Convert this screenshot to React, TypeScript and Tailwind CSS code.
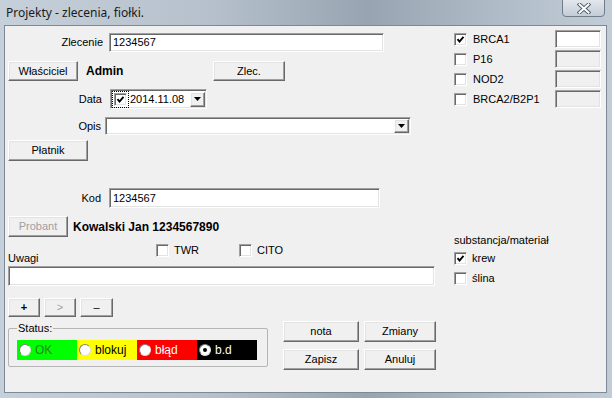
import React from "react";

const sunken =
  "border border-t-[#a0a0a0] border-l-[#a0a0a0] border-r-white border-b-white shadow-[inset_1px_1px_0_#696969,inset_-1px_-1px_0_#e3e3e3]";
const raised =
  "border border-t-white border-l-white border-r-[#696969] border-b-[#696969] shadow-[inset_-1px_-1px_0_#a0a0a0,inset_1px_1px_0_#e3e3e3] bg-[#f0f0f0]";

const Button = ({label, className = "", disabled = false}: {label: string; className?: string; disabled?: boolean}) => (
  <div
    className={`${raised} ${className} flex items-center justify-center text-[11px] ${
      disabled ? "text-[#a0a0a0]" : "text-black"
    }`}
  >
    {label}
  </div>
);

const Check = ({checked = false}: {checked?: boolean}) => (
  <span className={`${sunken} w-[13px] h-[13px] bg-white flex items-center justify-center shrink-0`}>
    {checked && (
      <svg width="9" height="9" viewBox="0 0 9 9">
        <polyline points="1.5,4.2 3.5,6.5 7.5,1.8" fill="none" stroke="#000" strokeWidth="1.9" />
      </svg>
    )}
  </span>
);

const Arrow = () => (
  <svg width="7" height="4" viewBox="0 0 7 4">
    <polygon points="0,0 7,0 3.5,4" fill="#000" />
  </svg>
);

const Radio = ({checked = false}: {checked?: boolean}) => (
  <span className="w-[12px] h-[12px] rounded-full bg-white border border-[#808080] border-b-[#e0e0e0] border-r-[#e0e0e0] flex items-center justify-center shrink-0">
    {checked && <span className="w-[4px] h-[4px] rounded-full bg-black" />}
  </span>
);

const Label = ({text, w}: {text: string; w: string}) => (
  <span className={`${w} text-right text-[11px] shrink-0`}>{text}</span>
);

const genes = [
  {name: "BRCA1", checked: true},
  {name: "P16", checked: false},
  {name: "NOD2", checked: false},
  {name: "BRCA2/B2P1", checked: false},
];

const statuses = [
  {name: "OK", bg: "bg-[#00ff00]", fg: "text-[#2f7f2f]", checked: false},
  {name: "blokuj", bg: "bg-[#ffff00]", fg: "text-black", checked: false},
  {name: "błąd", bg: "bg-[#ff0000]", fg: "text-white", checked: false},
  {name: "b.d", bg: "bg-black", fg: "text-white", checked: true},
];

const App = () => {
  return (
    <div className="w-[612px] h-[398px] flex flex-col bg-[linear-gradient(90deg,#c6d0da_0%,#b5c0cc_35%,#98a4b1_60%,#b3bfcb_85%,#c2ccd6_100%)] font-['Liberation_Sans',Arial,sans-serif] text-black overflow-hidden">
      {/* Title bar */}
      <div className="h-[25px] flex items-start shrink-0">
        <span className="ml-[6px] mt-[4px] text-[12px] font-['Noto_Sans',sans-serif] text-[#1a1a1a]">
          Projekty - zlecenia, fiołki.
        </span>
        <div className="ml-auto mr-[7px] -mt-[1px] w-[43px] h-[18px] rounded-b-[4px] border border-[#6f7c8a] bg-[linear-gradient(180deg,#e2e7ec,#c3ccd6)] flex items-center justify-center">
          <svg width="14" height="11" viewBox="0 0 14 11">
            <path d="M2.5 1.5 L11.5 9.5 M11.5 1.5 L2.5 9.5" stroke="#4a5562" strokeWidth="3.8" strokeLinecap="square" />
            <path d="M2.5 1.5 L11.5 9.5 M11.5 1.5 L2.5 9.5" stroke="#ffffff" strokeWidth="2" strokeLinecap="square" />
          </svg>
        </div>
      </div>

      {/* Client area */}
      <div className="ml-[4px] mr-[5px] h-[368px] border border-[#7d8996] bg-[#f0f0f0] flex">
        {/* Left column */}
        <div className="pl-[3px] w-[435px] flex flex-col">
          <div className="mt-[7px] h-[19px] flex items-center">
            <Label text="Zlecenie" w="w-[95px]" />
            <div className={`${sunken} ml-[6px] w-[275px] h-[19px] bg-white flex items-center pl-[3px] text-[11px]`}>
              1234567
            </div>
          </div>

          <div className="mt-[9px] h-[20px] flex items-center">
            <Button label="Właściciel" className="w-[70px] h-[20px]" />
            <span className="ml-[8px] w-[127px] text-[12px] font-bold">Admin</span>
            <Button label="Zlec." className="w-[72px] h-[20px]" />
          </div>

          <div className="mt-[8px] h-[20px] flex items-center">
            <Label text="Data" w="w-[94px]" />
            <div className={`${sunken} ml-[8px] w-[97px] h-[20px] bg-white flex items-center text-[11px]`}>
              <span className="ml-[1px] p-[1px] border border-dotted border-black flex">
                <Check checked />
              </span>
              <span className="ml-[1px]">2014.11.08</span>
              <div className={`${raised} ml-auto mr-[1px] w-[15px] h-[15px] flex items-center justify-center`}>
                <Arrow />
              </div>
            </div>
          </div>

          <div className="mt-[8px] h-[18px] flex items-center">
            <Label text="Opis" w="w-[93px]" />
            <div className={`${sunken} ml-[4px] w-[306px] h-[18px] bg-white flex items-center`}>
              <div className={`${raised} ml-auto mr-[1px] w-[15px] h-[14px] flex items-center justify-center`}>
                <Arrow />
              </div>
            </div>
          </div>

          <div className="mt-[5px] h-[21px] flex items-center">
            <Button label="Płatnik" className="w-[80px] h-[21px]" />
          </div>

          <div className="mt-[27px] h-[20px] flex items-center">
            <Label text="Kod" w="w-[93px]" />
            <div className={`${sunken} ml-[8px] w-[271px] h-[20px] bg-white flex items-center pl-[3px] text-[11px]`}>
              1234567
            </div>
          </div>

          <div className="mt-[8px] h-[21px] flex items-center">
            <Button label="Probant" className="w-[60px] h-[21px]" disabled />
            <span className="ml-[5px] text-[12px] font-bold">Kowalski Jan 1234567890</span>
          </div>

          <div className="mt-[7px] h-[22px] flex">
            <span className="w-[148px] self-end text-[11px] leading-[13px] mb-[1px]">Uwagi</span>
            <div className="flex items-center h-[13px] text-[11px]">
              <Check />
              <span className="ml-[5px] w-[65px]">TWR</span>
              <Check />
              <span className="ml-[5px]">CITO</span>
            </div>
          </div>

          <div className={`${sunken} w-[427px] h-[20px] bg-white`} />

          <div className="mt-[12px] h-[19px] flex gap-[4px]">
            <Button label="+" className="w-[32px] h-[19px] font-bold" />
            <Button label=">" className="w-[32px] h-[19px] text-[#a0a0a0]" disabled />
            <Button label="–" className="w-[33px] h-[19px]" />
          </div>

          <div className="mt-[4px] flex items-start">
            <fieldset className="mt-[1px] w-[260px] border border-[#b5b5b5] rounded-[2px] px-[8px] pb-[6px] text-[11px]">
              <legend className="px-[1px] leading-[12px]">Status:</legend>
              <div className="mt-[6px] flex h-[20px]">
                {statuses.map((s) => (
                  <div key={s.name} className={`${s.bg} ${s.fg} w-[60px] h-[20px] flex items-center pl-[2px] text-[12px]`}>
                    <Radio checked={s.checked} />
                    <span className="ml-[4px]">{s.name}</span>
                  </div>
                ))}
              </div>
            </fieldset>
            <div className="ml-[15px] grid grid-cols-[76px_72px] gap-x-[5px] gap-y-[7px]">
              <Button label="nota" className="h-[21px]" />
              <Button label="Zmiany" className="h-[21px]" />
              <Button label="Zapisz" className="h-[21px]" />
              <Button label="Anuluj" className="h-[21px]" />
            </div>
          </div>
        </div>

        {/* Right column */}
        <div className="ml-[14px] w-[149px] flex flex-col">
          <div className="mt-[3px] flex flex-col">
            {genes.map((g, i) => (
              <div key={g.name} className="h-[20px] flex items-center text-[11px]">
                <Check checked={g.checked} />
                <span className="ml-[6px] w-[82px]">{g.name}</span>
                <div className={`${sunken} w-[46px] h-[18px] ${i === 0 ? "bg-white" : "bg-[#f0f0f0]"}`} />
              </div>
            ))}
          </div>
          <span className="mt-[124px] h-[15px] text-[11px] leading-[15px]">substancja/materiał</span>
          <div className="h-[20px] flex items-center text-[11px]">
            <Check checked />
            <span className="ml-[5px]">krew</span>
          </div>
          <div className="h-[20px] flex items-center text-[11px]">
            <Check />
            <span className="ml-[5px]">ślina</span>
          </div>
        </div>
      </div>
    </div>
  );
};

export default App;
